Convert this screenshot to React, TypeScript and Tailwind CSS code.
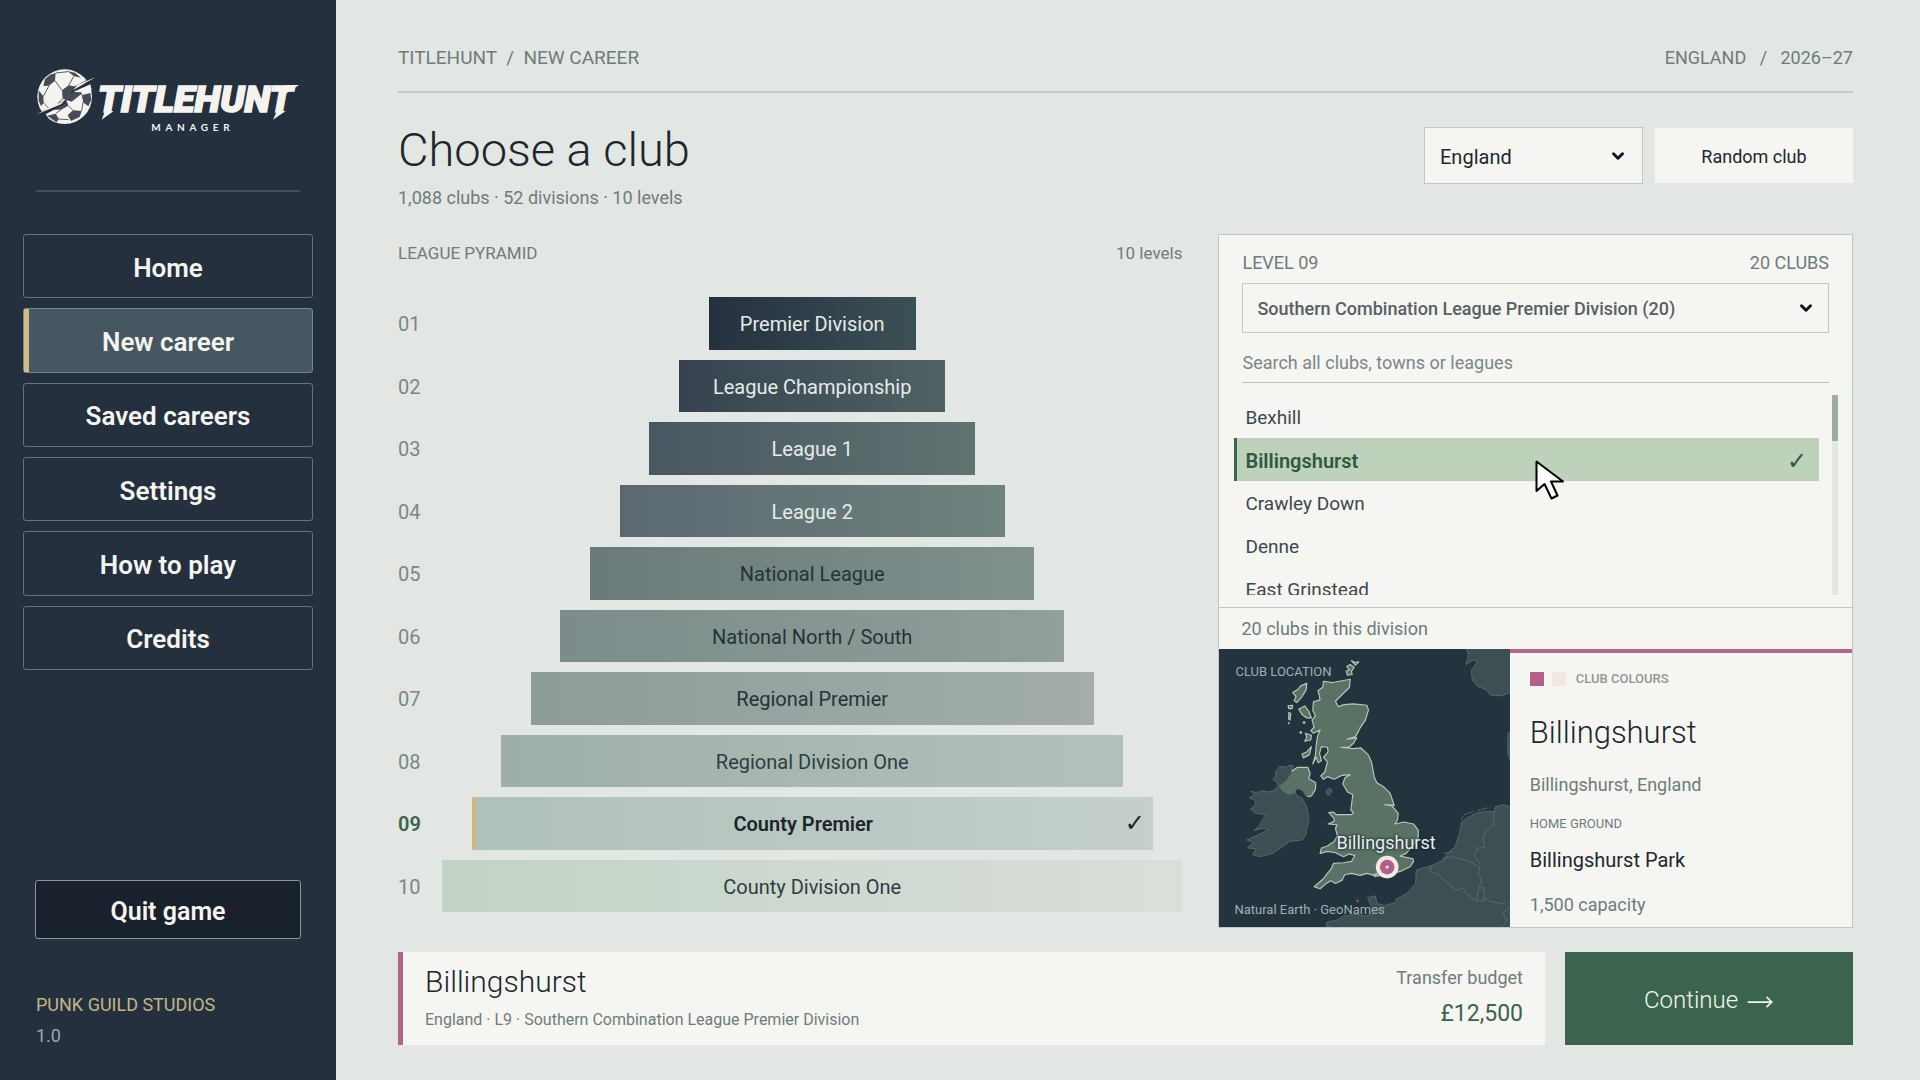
import { ChevronDown, MoveRight } from "lucide-react";

const NAV_ITEMS = ["Home", "New career", "Saved careers", "Settings", "How to play", "Credits"];

interface PyramidLevel {
  label: string;
  number: string;
  bar: string;
}

const LEVELS: PyramidLevel[] = [
  { number: "01", label: "Premier Division", bar: "w-[28%] from-[#25303f] to-[#3b5155] text-[#e6ebe8]" },
  { number: "02", label: "League Championship", bar: "w-[36%] from-[#36434f] to-[#4e6263] text-[#e6ebe8]" },
  { number: "03", label: "League 1", bar: "w-[44%] from-[#495761] to-[#5f7371] text-[#e6ebe8]" },
  { number: "04", label: "League 2", bar: "w-[52%] from-[#5b6872] to-[#6d837e] text-[#e6ebe8]" },
  { number: "05", label: "National League", bar: "w-[60%] from-[#6b7b7b] to-[#80908d] text-[#24333a]" },
  { number: "06", label: "National North / South", bar: "w-[68%] from-[#7b8c8a] to-[#929f9b] text-[#24333a]" },
  { number: "07", label: "Regional Premier", bar: "w-[76%] from-[#8d9c99] to-[#a3aeaa] text-[#24333a]" },
  { number: "08", label: "Regional Division One", bar: "w-[84%] from-[#9eafa7] to-[#b3c1bb] text-[#2f3d42]" },
  { number: "09", label: "County Premier", bar: "w-[92%] from-[#b0c0ba] to-[#c5d0ca] text-[#1b262b]" },
  { number: "10", label: "County Division One", bar: "w-[100%] from-[#c2d3c5] to-[#dadfda] text-[#2f3d42]" },
];

const CLUBS = ["Bexhill", "Billingshurst", "Crawley Down", "Denne", "East Grinstead"];

function Logo() {
  return (
    <svg aria-label="Titlehunt Manager" className="h-[70px] w-[267px]" role="img" viewBox="100 80 801 210">
      <circle cx="195" cy="169" fill="#f4f3ee" r="82" />
      <g fill="#464b58">
        <path d="M187 150 207 135 238 141 246 160 216 184 189 175Z" />
        <path d="M131 137 136 116 151 103 168 98 166 121 148 136Z" />
        <path d="M203 92 226 97 244 112 223 108Z" />
        <path d="M117 150 131 168 132 188 124 197 117 182Z" />
        <path d="M152 208 178 186 202 184 206 196 184 208Z" />
        <path d="M142 226 168 220 178 236 170 246Z" />
        <path d="M204 224 220 210 246 212 240 230 214 242Z" />
        <path d="M248 164 272 158 275 178 266 198 250 186Z" />
      </g>
      <path d="M166 121 187 150M168 98 205 94M148 136 131 168M189 175 178 186M207 135 222 108M132 188 152 208M206 196 220 210M246 160 250 176M184 208 168 220M178 236 206 238M250 186 246 212" fill="none" stroke="#5b5f69" strokeWidth="3" />
      <path d="M290 104 226 138 214 158 300 128Z" fill="#24303d" />
      <path d="M288 110 233 134 220 150Z" fill="#f4f3ee" />
      <path d="M222 154 272 132 276 148 240 156Z" fill="#f4f3ee" />
      <path d="M102 224 204 176 196 190 138 222 150 240Z" fill="#24303d" />
      <path d="M112 222 156 196 194 182 184 192Z" fill="#f4f3ee" />
      <text
        fill="#f4f3ee"
        fontFamily="Roboto, sans-serif"
        fontSize="113"
        fontStyle="italic"
        fontWeight="900"
        stroke="#f4f3ee"
        strokeWidth="5"
        x="294"
        y="216"
      >
        TITLEHUNT
      </text>
      <g fill="#f4f3ee">
        <path d="M316 212H342L306 238Z" />
        <path d="M832 212H858L820 238Z" />
        <path d="M858 134H898L856 162Z" />
      </g>
      <text fill="#f4f3ee" fontFamily="Lato, sans-serif" fontSize="30" fontWeight="700" letterSpacing="14" x="455" y="273">MANAGER</text>
    </svg>
  );
}

function Sidebar() {
  return (
    <aside className="flex w-[336px] shrink-0 flex-col bg-[#24303d] px-[23px] pt-[67px] pb-[30px]">
      <div className="ml-2.5">
        <Logo />
      </div>
      <hr className="mx-[13px] mt-[53px] border-t-2 border-[#3f4d5b]" />
      <nav className="mt-[42px] grid h-[436px] grid-rows-6 gap-2.5">
        {NAV_ITEMS.map(item => (
          <button
            aria-current={item === "New career" ? "page" : undefined}
            className={item === "New career"
              ? "relative rounded-[3px] border border-[#75858c] bg-[#465762] pt-1 text-[26px] font-semibold text-[#f4f5f0] before:absolute before:inset-y-0 before:left-0 before:w-[5px] before:bg-[#cfbd88]"
              : "rounded-[3px] border border-[#64737a] pt-1 text-[26px] font-semibold text-[#f4f5f0]"}
            key={item}
            type="button"
          >
            {item}
          </button>
        ))}
      </nav>
      <button className="mx-3 mt-auto h-[59px] rounded-[3px] border border-[#8b9897] bg-[#18212c] pt-1 text-[25px] font-semibold text-[#f4f5f0]" type="button">
        Quit game
      </button>
      <p className="mx-[13px] mt-[52px] text-lg leading-7 text-[#c2b587]">PUNK GUILD STUDIOS</p>
      <p className="mx-[13px] mt-[3px] text-lg leading-7 text-[#9aa6b2]">1.0</p>
    </aside>
  );
}

function Pyramid() {
  return (
    <section className="flex flex-col pt-[5px] pb-4">
      <div className="flex justify-between text-[17px] leading-7 text-[#6f7c7c]">
        <h2>LEAGUE PYRAMID</h2>
        <span>10 levels</span>
      </div>
      <ol className="mt-[30px] grid flex-1 grid-rows-10 gap-2.5">
        {LEVELS.map(level => (
          <li className="flex items-stretch" key={level.number}>
            <span className={level.number === "09"
              ? "flex w-11 shrink-0 items-center pt-0.5 text-xl font-semibold text-[#3a644d]"
              : "flex w-11 shrink-0 items-center pt-0.5 text-xl text-[#7b8786]"}
            >
              {level.number}
            </span>
            <div className="flex flex-1 justify-center text-xl">
              <button className={`relative bg-linear-to-r pt-0.5 ${level.bar} ${level.number === "09" ? "border-l-4 border-[#cfb97c] pr-[22px] font-semibold" : ""}`} type="button">
                {level.label}
                {level.number === "09" && <CheckMark className="absolute top-1/2 right-2 -translate-y-1/2" />}
              </button>
            </div>
          </li>
        ))}
      </ol>
    </section>
  );
}

function CheckMark({ className }: { className?: string }) {
  return <span className={`font-['DejaVu_Sans'] text-2xl leading-none font-normal ${className ?? ""}`}>✓</span>;
}

function ClubList() {
  return (
    <div className="mt-3 mr-3.5 ml-[15px] flex h-[200px] gap-[13px] overflow-hidden">
      <ul className="flex-1">
        {CLUBS.map(club => (
          <li className="relative" key={club}>
            <button
              className={club === "Billingshurst"
                ? "flex h-[43px] w-full items-center justify-between border-l-3 border-[#3a644d] bg-[#bdd1bb] pt-0.5 pr-3 pl-2 text-xl font-semibold text-[#31593f]"
                : "flex h-[43px] w-full items-center pt-1 pl-[11px] text-[19px] text-[#3d484d]"}
              type="button"
            >
              {club}
              {club === "Billingshurst" && <CheckMark />}
            </button>
            {club === "Billingshurst" && <Cursor />}
          </li>
        ))}
      </ul>
      <div className="w-1.5 bg-[#e2e7e2]">
        <div className="h-[46px] bg-[#9aaea4]" />
      </div>
    </div>
  );
}

function Cursor() {
  return (
    <svg className="absolute top-[22px] left-[301px] z-10 h-10 w-[30px]" viewBox="0 0 30 40">
      <path d="M1.500 1.500V31L9.500 24 16.500 38.500 22.500 35.500 16 21.500H28Z" fill="#fff" stroke="#000" strokeLinejoin="round" strokeWidth="2" />
    </svg>
  );
}

function LocationMap() {
  return (
    <div className="relative min-h-[278px] overflow-hidden bg-[#23343e]">
      <svg className="absolute inset-0 size-full" preserveAspectRatio="xMidYMid slice" viewBox="27 27 870 834">
        <g fill="#3c5054" stroke="#57706f" strokeWidth="2.500">
          <path d="M768 27 774 45 767 74 790 60 800 68 783 92 786 120 803 140 825 148 840 165 872 168 900 158V20Z" />
          <path d="M245 392 250 377 237 376 228 382 210 378 195 395 198 408 188 420 200 424 204 436 195 450 175 456 158 452 140 458 122 454 134 464 118 473 134 480 136 494 122 508 138 520 168 524 156 540 150 556 132 571 156 565 176 568 150 582 132 590 110 600 130 606 113 624 138 626 128 644 150 650 188 640 216 620 240 604 276 600 288 584 290 564 297 540 290 500 276 474 260 468 250 440Z" />
          <path d="M900 500 880 494 855 500 852 514 825 514 796 520 770 534 754 546 748 580 734 620 712 640 700 660 664 676 618 690 616 730 590 760 556 778 560 786 524 796 500 790 496 768 472 772 484 800 486 822 462 828 440 822 400 828 380 840 350 846 348 858 390 870H900Z" />
          <path d="M350 462 348 452 358 444 366 450 358 466Z" />
          <path d="M893 280 899 276V360L892 340Z" />
        </g>
        <path d="M852 514 850 556 826 574 818 600 824 622 802 624 792 648 810 672 804 700 814 720 806 744M664 676 660 694 690 706 702 722 724 736 730 752 758 744 770 762 798 782 806 744 820 742 822 782 798 782M818 770 840 784 888 792M900 804 878 818 890 840 872 870M700 640 728 634M696 656 720 650 764 660 800 676M752 540 762 524 790 514M800 512 830 504" fill="none" stroke="#57706f" strokeWidth="2.500" />
        <path d="M245 394 262 382 293 382 300 400 296 416 317 428 316 448 304 468 288 470 276 452 262 446 252 460 236 464 216 452 206 438 226 424 238 408Z" fill="#5a7265" />
        <g fill="#5a7265" stroke="#b5cab7" strokeLinejoin="round" strokeWidth="3.500">
          <path d="M245 394 262 382 293 382 300 400 296 416 317 428 316 448 304 468 292 470" fill="none" />
          <path d="M340 124 368 128 420 118 418 142 400 160 376 184 384 200 402 194 430 192 470 196 475 210 466 240 450 264 436 290 410 298 440 294 430 310 416 322 392 322 430 326 452 324 474 344 484 366 492 410 500 428 520 440 540 460 552 496 524 494 546 498 564 520 562 540 554 552 580 546 610 552 624 570 624 592 608 616 588 640 570 648 608 656 610 664 600 680 570 694 540 702 498 708 470 700 450 706 424 700 404 704 396 720 376 730 362 722 346 732 330 746 312 740 326 728 340 716 350 702 362 688 370 670 400 668 424 664 434 646 416 642 400 650 376 638 352 634 330 640 334 624 352 618 372 604 382 588 376 566 380 554 354 552 372 544 372 536 356 518 370 516 378 524 424 524 430 518 422 510 428 464 412 456 398 432 404 414 420 404 396 406 372 418 352 410 340 418 332 408 344 396 352 366 340 352 354 336 352 322 334 320 328 340 334 362 324 368 318 352 308 372 316 346 318 318 322 290 330 270 310 280 302 272 312 262 306 240 316 228 308 212 310 186 330 180 324 152 338 142Z" />
          <path d="M290 130 288 150 276 170 260 188 252 182 258 170 248 158 264 148 272 138Z" />
          <path d="M266 208 284 198 296 214 304 234 290 234 276 224Z" />
          <path d="M234 198 248 196 246 206 236 206ZM236 218 242 220 240 240 236 238Z" />
          <path d="M286 280 304 286 302 300 284 304 290 292ZM304 320 298 344 280 354 276 342 290 336Z" />
          <path d="M410 80 420 74 432 82 424 94 426 104 412 106 408 94 418 90ZM424 62 434 68 446 66 436 76Z" />
          <path d="M490 704 500 700 496 710Z" />
        </g>
        <g fill="#b5cab7">
          <circle cx="236" cy="250" r="3" />
          <circle cx="272" cy="278" r="4" />
          <circle cx="282" cy="248" r="4" />
          <circle cx="442" cy="782" fill="#57706f" r="4" />
        </g>
        <circle cx="531" cy="681" fill="#f3ebe1" r="34" />
        <circle cx="531" cy="681" fill="#b45f8b" r="22" />
        <circle cx="531" cy="681" fill="#f3ebe1" r="5" />
      </svg>
      <span className="absolute top-[13px] left-4 text-[13px] leading-5 text-[#9fb0b0]">CLUB LOCATION</span>
      <span className="absolute top-[182px] left-[117px] text-lg leading-6 text-[#e8efee] [text-shadow:0_0_3px_#1a2831,0_0_3px_#1a2831]">Billingshurst</span>
      <span className="absolute bottom-[7px] left-[15px] text-[13px] leading-5 text-[#9fb0b0]">Natural Earth · GeoNames</span>
    </div>
  );
}

function ClubDetails() {
  return (
    <div className="border-t-4 border-[#b1688c] pt-4 pl-5">
      <div className="flex items-center gap-2">
        <span className="size-3.5 bg-[#b75d89]" />
        <span className="size-3.5 bg-[#f1e9dd]" />
        <span className="ml-0.5 text-[13px] leading-5 font-medium text-[#8d9895]">CLUB COLOURS</span>
      </div>
      <h2 className="mt-6 text-[31px] leading-10 font-light text-[#1d272d]">Billingshurst</h2>
      <p className="mt-5 text-lg leading-6 text-[#6f7c7c]">Billingshurst, England</p>
      <p className="mt-[17px] text-[13px] leading-5 text-[#6f7c7c]">HOME GROUND</p>
      <p className="mt-3 text-xl leading-7 text-[#1d272d]">Billingshurst Park</p>
      <p className="mt-[19px] text-lg leading-6 text-[#6f7c7c]">1,500 capacity</p>
    </div>
  );
}

function ClubPanel() {
  return (
    <section className="flex flex-col border border-[#c0c7c5] bg-[#f5f6f1]">
      <div className="flex flex-col px-[23px] pt-3.5">
        <div className="flex justify-between text-lg leading-7 text-[#6f7c7c]">
          <span>LEVEL 09</span>
          <span>20 CLUBS</span>
        </div>
        <div className="relative mt-1.5">
          <select aria-label="Division" className="h-[50px] w-full appearance-none border border-[#c0c7c5] pt-0.5 pl-3.5 text-lg font-medium text-[#566065]">
            <option>Southern Combination League Premier Division (20)</option>
          </select>
          <ChevronDown className="pointer-events-none absolute top-4 right-3.5 text-[#10181d]" size={18} strokeWidth={4} />
        </div>
        <input
          aria-label="Search clubs"
          className="mt-2.5 h-10 border-b border-[#b9c1bf] text-lg outline-none placeholder:text-[#7b8786]"
          placeholder="Search all clubs, towns or leagues"
          type="text"
        />
      </div>
      <ClubList />
      <p className="mt-3 flex h-[42px] items-center border-t border-[#c0c7c5] px-[22px] text-lg text-[#6f7c7c]">20 clubs in this division</p>
      <div className="grid flex-1 grid-cols-[291fr_343fr]">
        <LocationMap />
        <ClubDetails />
      </div>
    </section>
  );
}

export default function App() {
  return (
    <div className="flex min-h-screen bg-[#e2e7e3] font-[Roboto,sans-serif] text-[#1d272d]">
      <Sidebar />
      <main className="flex min-w-0 flex-1 flex-col pt-11 pr-[67px] pb-[35px] pl-[62px]">
        <header className="flex justify-between border-b-2 border-[#c3cac8] pb-[19px] leading-7 whitespace-pre text-[#6f7c7c]">
          <span className="text-[19px]">TITLEHUNT  /  NEW CAREER</span>
          <span className="text-lg">ENGLAND   /   2026–27</span>
        </header>
        <div className="mt-[34px] flex items-start justify-between">
          <div>
            <h1 className="text-[47px] leading-[46px] font-light">Choose a club</h1>
            <p className="mt-[13px] text-lg leading-6 text-[#6f7c7c]">1,088 clubs · 52 divisions · 10 levels</p>
          </div>
          <div className="flex items-center gap-3">
            <div className="relative">
              <select aria-label="Country" className="h-[57px] w-[219px] appearance-none border border-[#c0c7c5] bg-[#f5f6f1] pt-0.5 pl-[15px] text-xl">
                <option>England</option>
              </select>
              <ChevronDown className="pointer-events-none absolute top-5 right-4 text-[#10181d]" size={18} strokeWidth={4} />
            </div>
            <button className="h-[55px] w-[198px] bg-[#f5f6f1] pt-0.5 text-lg" type="button">Random club</button>
          </div>
        </div>
        <div className="mt-6 grid flex-1 grid-cols-[785fr_635fr] gap-9">
          <Pyramid />
          <ClubPanel />
        </div>
        <footer className="mt-6 flex gap-5">
          <div className="flex h-[93px] flex-1 items-start justify-between border-l-5 border-[#b1648a] bg-[#f5f6f1] px-[22px] pt-2.5">
            <div>
              <p className="text-[30px] leading-10 font-light">Billingshurst</p>
              <p className="mt-1 text-base leading-7 text-[#6f7c7c]">England · L9 · Southern Combination League Premier Division</p>
            </div>
            <div className="pt-0.5 text-right">
              <p className="text-lg leading-7 text-[#6f7c7c]">Transfer budget</p>
              <p className="mt-1.5 text-[23px] leading-8 text-[#3a644d]">£12,500</p>
            </div>
          </div>
          <button className="flex h-[93px] w-[288px] items-center justify-center gap-2 bg-[#3a644d] pt-0.5 text-2xl font-light text-[#f4f5f0]" type="button">
            Continue
            <MoveRight className="mt-1" size={28} strokeWidth={1.5} />
          </button>
        </footer>
      </main>
    </div>
  );
}
